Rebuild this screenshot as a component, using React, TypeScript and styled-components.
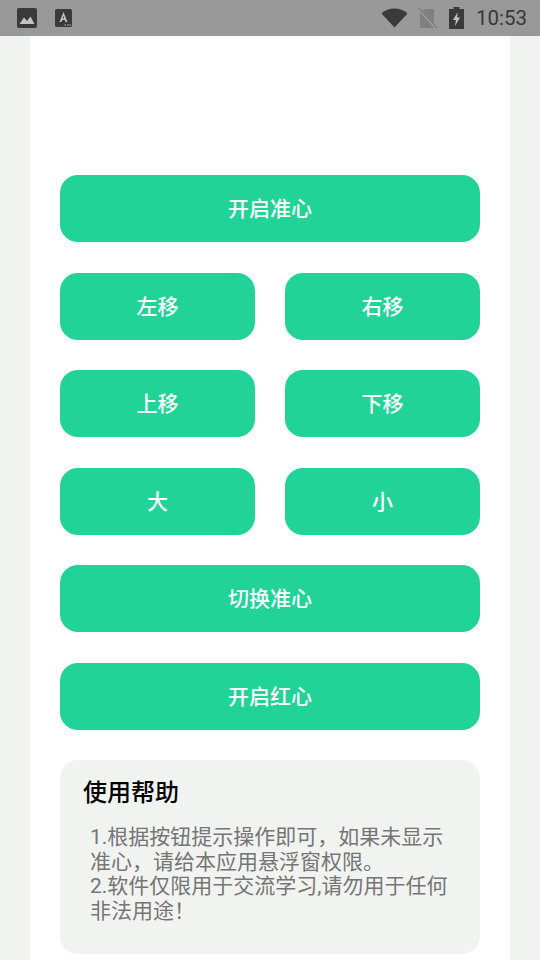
import React from "react";
import styled, { createGlobalStyle } from "styled-components";

const Global = createGlobalStyle`
  html, body { margin: 0; padding: 0; background: #f1f3f1; }
  body { font-family: "Roboto", "Noto Sans CJK SC", sans-serif; }
`;

const Page = styled.div`
  width: 540px;
  height: 960px;
  overflow: hidden;
  background: #f1f3f1;
`;

const StatusBar = styled.div`
  height: 36px;
  background: #999999;
  display: flex;
  align-items: center;
  padding: 0 13px 0 17px;
  box-sizing: border-box;
`;

const LeftIcons = styled.div`
  display: flex;
  align-items: center;
  gap: 18px;
  flex: 1;
`;

const RightIcons = styled.div`
  display: flex;
  align-items: center;
`;

const Time = styled.span`
  font-family: "Roboto", sans-serif;
  font-size: 20.5px;
  color: #383838;
  margin-left: 12px;
`;

const Sheet = styled.main`
  width: 480px;
  height: 924px;
  margin: 0 auto;
  background: #ffffff;
  padding: 139px 30px 0;
  box-sizing: border-box;
  display: flex;
  flex-direction: column;
  gap: 30.5px;
`;

const Row = styled.div`
  display: flex;
  gap: 30px;
`;

const ActionButton = styled.button`
  flex: 1;
  height: 67px;
  border: 0;
  border-radius: 18px;
  background: #22d398;
  color: #ffffff;
  font-family: "Noto Sans CJK SC", sans-serif;
  font-size: 21px;
  font-weight: 500;
  padding: 0 0 3px;
`;

const Help = styled.section`
  height: 194px;
  background: #f1f3f1;
  border-radius: 18px;
  padding: 15px 30px 0 23px;
  box-sizing: border-box;
`;

const HelpTitle = styled.h2`
  margin: 0;
  font-family: "Noto Sans CJK SC", sans-serif;
  font-size: 24px;
  line-height: 32px;
  font-weight: 500;
  color: #000000;
`;

const HelpBody = styled.p`
  margin: 18px 0 0 7px;
  font-family: "Roboto", "Noto Sans CJK SC", sans-serif;
  font-size: 21px;
  line-height: 24.7px;
  color: #757575;
`;

const ImageIcon = () => (
  <svg width="20" height="20" viewBox="0 0 20 20">
    <rect width="20" height="20" rx="2" fill="#3a3a3a" />
    <path d="M2.5 16 L7 9.5 L10 13 L13.5 8.5 L17.5 16 Z" fill="#c4c4c4" />
  </svg>
);

const FontIcon = () => (
  <svg width="17" height="18" viewBox="0 0 17 18">
    <rect width="17" height="18" rx="1.5" fill="#3a3a3a" />
    <path d="M8.5 3 L12.5 13 H10.6 L9.8 11 H7.2 L6.4 13 H4.5 Z M8.5 6.6 L7.8 9.4 H9.2 Z" fill="#c4c4c4" fillRule="evenodd" />
    <path d="M9.5 15.5 h1.5 v1 h-1.5 Z M12 15.5 h1.5 v1 h-1.5 Z M14.5 15.5 h1.5 v1 h-1.5 Z" fill="#c4c4c4" />
  </svg>
);

const WifiIcon = () => (
  <svg width="27" height="20" viewBox="0 0 27 20">
    <path d="M0.5 5.5 C4 2.3 8.5 0.5 13.5 0.5 C18.5 0.5 23 2.3 26.5 5.5 L13.5 19.5 Z" fill="#3a3a3a" />
  </svg>
);

const SimIcon = () => (
  <svg width="19" height="21" viewBox="0 0 19 21" style={{ marginLeft: 10 }}>
    <path d="M7 1 H16 V20 H2 V6 Z" fill="#808080" />
    <path d="M0 0 L18 20" stroke="#999" strokeWidth="2.8" />
    <path d="M1 0 L19 20" stroke="#6e6e6e" strokeWidth="1" />
  </svg>
);

const BatteryIcon = () => (
  <svg width="15" height="22" viewBox="0 0 15 22" style={{ marginLeft: 12 }}>
    <path d="M4.5 0 H10.5 V2 H15 V22 H0 V2 H4.5 Z" fill="#3a3a3a" />
    <path d="M8.8 5 L4 13 H7 L6 19 L11 10.5 H8 Z" fill="#c4c4c4" />
  </svg>
);

export default function App() {
  return (
    <Page>
      <Global />
      <StatusBar>
        <LeftIcons>
          <ImageIcon />
          <FontIcon />
        </LeftIcons>
        <RightIcons>
          <WifiIcon />
          <SimIcon />
          <BatteryIcon />
          <Time>10:53</Time>
        </RightIcons>
      </StatusBar>
      <Sheet>
        <Row><ActionButton>开启准心</ActionButton></Row>
        <Row><ActionButton>左移</ActionButton><ActionButton>右移</ActionButton></Row>
        <Row><ActionButton>上移</ActionButton><ActionButton>下移</ActionButton></Row>
        <Row><ActionButton>大</ActionButton><ActionButton>小</ActionButton></Row>
        <Row><ActionButton>切换准心</ActionButton></Row>
        <Row><ActionButton>开启红心</ActionButton></Row>
        <Help>
          <HelpTitle>使用帮助</HelpTitle>
          <HelpBody>
            1.根据按钮提示操作即可，如果未显示准心，请给本应用悬浮窗权限。
            <br />
            2.软件仅限用于交流学习,请勿用于任何非法用途！
          </HelpBody>
        </Help>
      </Sheet>
    </Page>
  );
}
